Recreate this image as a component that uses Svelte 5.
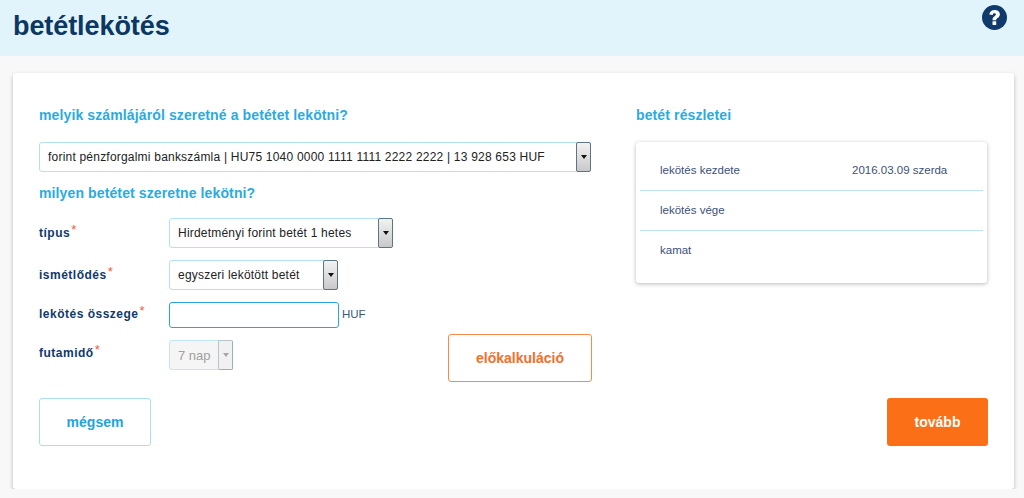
<script>
  const rows = [
    { label: 'lekötés kezdete', value: '2016.03.09 szerda' },
    { label: 'lekötés vége', value: '' },
    { label: 'kamat', value: '' }
  ];
</script>

{#snippet arrow(disabled)}
  <span class="arrow" class:off={disabled}><i></i></span>
{/snippet}

<header class="top">
  <h1>betétlekötés</h1>
  <svg class="help" viewBox="0 0 26 26" width="25" height="25" aria-label="súgó">
    <circle cx="13" cy="13" r="13" fill="#0f3a6b" />
    <path d="M7.600 10c.2-3.100 2.500-4.900 5.600-4.900 3.200 0 5.400 1.800 5.400 4.400 0 2.100-1.100 3.100-2.500 4-1 .7-1.300 1.100-1.300 2.300h-3.900c0-2.200.7-3.200 2.100-4.200.9-.6 1.400-1 1.400-1.700 0-.8-.6-1.200-1.500-1.200-1 0-1.500.5-1.600 1.600z" fill="#fff" />
    <rect x="10.900" y="17" width="3.900" height="3.700" rx=".5" fill="#fff" />
  </svg>
</header>

<main class="card">
  <div class="cols">
    <section class="left">
      <h2>melyik számlájáról szeretné a betétet lekötni?</h2>
      <div class="select wide">
        <span class="val">forint pénzforgalmi bankszámla | HU75 1040 0000 1111 1111 2222 2222 | 13 928 653 HUF</span>
        {@render arrow(false)}
      </div>
      <h2 class="second">milyen betétet szeretne lekötni?</h2>

      <div class="row r1">
        <span class="lbl">típus<em>*</em></span>
        <div class="select s-type">
          <span class="val">Hirdetményi forint betét 1 hetes</span>
          {@render arrow(false)}
        </div>
      </div>
      <div class="row r2">
        <span class="lbl">ismétlődés<em>*</em></span>
        <div class="select s-rep">
          <span class="val">egyszeri lekötött betét</span>
          {@render arrow(false)}
        </div>
      </div>
      <div class="row r3">
        <span class="lbl">lekötés összege<em>*</em></span>
        <input class="amount" type="text" />
        <span class="unit">HUF</span>
      </div>
      <div class="last">
        <div class="row r4">
          <span class="lbl">futamidő<em>*</em></span>
          <div class="select s-term disabled">
            <span class="val">7 nap</span>
            {@render arrow(true)}
          </div>
        </div>
        <button class="btn calc">előkalkuláció</button>
      </div>
    </section>

    <aside class="right">
      <h2>betét részletei</h2>
      <div class="details">
        {#each rows as r}
          <div class="d-row">
            <span class="d-l">{r.label}</span>
            <span class="d-v">{r.value}</span>
          </div>
        {/each}
      </div>
    </aside>
  </div>

  <div class="actions">
    <button class="btn cancel">mégsem</button>
    <button class="btn next">tovább</button>
  </div>
</main>

<style>
  :global(body) {
    margin: 0;
    background: #f8f8f8;
    font-family: "Liberation Sans", Arial, sans-serif;
  }
  .top {
    height: 56px;
    background: #e1f4fc;
    display: flex;
    justify-content: space-between;
    align-items: flex-start;
    padding: 0 17px 0 13px;
    box-sizing: border-box;
  }
  h1 {
    margin: 0;
    font-size: 27px;
    line-height: 53px;
    font-weight: 700;
    letter-spacing: -0.08px;
    color: #0c3762;
  }
  .help {
    margin-top: 5px;
  }
  .card {
    margin: 17px 10px 0 13px;
    height: 416px;
    box-sizing: border-box;
    background: #fff;
    border-radius: 3px;
    box-shadow: 0 2px 4px rgba(0, 0, 0, 0.25);
    padding: 33px 26px 0;
  }
  .cols {
    display: flex;
    gap: 45px;
  }
  .left {
    width: 552px;
    flex: none;
  }
  .right {
    flex: 1;
  }
  h2 {
    margin: 0;
    font-size: 14px;
    line-height: 18px;
    font-weight: 700;
    color: #29abe2;
    letter-spacing: 0.12px;
  }
  .second {
    margin-top: 12px;
  }
  .select {
    display: flex;
    align-items: stretch;
    box-sizing: border-box;
    border: 1px solid #b5e0f2;
    border-radius: 3px;
    background: #fff;
    font-size: 12px;
    letter-spacing: 0.21px;
    color: #222;
  }
  .val {
    flex: 1;
    padding-left: 8px;
    align-self: center;
    white-space: nowrap;
    overflow: hidden;
  }
  .wide {
    height: 30px;
    margin-top: 18px;
  }
  .arrow {
    width: 15px;
    flex: none;
    box-sizing: border-box;
    border: 1px solid #5f7482;
    border-radius: 2px;
    margin: -1px -1px -1px 0;
    background: linear-gradient(#f2f2f2, #c9c9c9);
    display: flex;
    align-items: center;
    justify-content: center;
  }
  .arrow i {
    width: 0;
    height: 0;
    border: 3.500px solid transparent;
    border-top: 4px solid #111;
    border-bottom: 0;
  }
  .arrow.off {
    background: #f1f1f1;
    border-color: #b9c4ca #8fb3c4 #8fb3c4 #b9c4ca;
  }
  .arrow.off i {
    border-top-color: #a6a6a6;
  }
  .row {
    display: flex;
    align-items: center;
  }
  .lbl {
    width: 130px;
    flex: none;
    font-size: 12px;
    font-weight: 700;
    letter-spacing: 0.5px;
    color: #0f3a6b;
    margin-top: -2px;
  }
  .r3 .lbl {
    margin-top: -3px;
  }
  .r4 .lbl {
    margin-top: -5px;
  }
  .lbl em {
    font-style: normal;
    font-weight: 400;
    color: #ec5a3c;
    font-size: 13px;
    margin-left: 1px;
    position: relative;
    top: -3px;
  }
  .r1 {
    margin-top: 16px;
  }
  .r2 {
    margin-top: 12px;
  }
  .r3 {
    margin-top: 12px;
  }
  .s-type {
    width: 224px;
    height: 30px;
  }
  .s-rep {
    width: 169px;
    height: 30px;
  }
  .amount {
    width: 170px;
    height: 26px;
    box-sizing: border-box;
    border: 1px solid #29a3d8;
    border-radius: 3px;
    padding: 0;
    outline: none;
    background: #fff;
  }
  .unit {
    margin-left: 3px;
    font-size: 11.500px;
    color: #3a5a7a;
    margin-top: -2px;
  }
  .last {
    display: flex;
    justify-content: space-between;
    align-items: flex-start;
    margin-top: 6px;
  }
  .r4 {
    margin-top: 6px;
  }
  .s-term {
    width: 64px;
    height: 30px;
  }
  .disabled {
    background: #f5f5f5;
    border-color: #c3e6f4;
    color: #a0a0a0;
    font-size: 13px;
    letter-spacing: 0;
  }
  .btn {
    font-family: inherit;
    font-size: 14px;
    font-weight: 700;
    height: 48px;
    border-radius: 3px;
    background: #fff;
    padding: 0;
    cursor: pointer;
  }
  .calc {
    width: 144px;
    margin-right: -1px;
    border: 1px solid #f58a4b;
    color: #f26f2c;
  }
  .actions {
    display: flex;
    justify-content: space-between;
    margin-top: 16px;
  }
  .cancel {
    width: 112px;
    border: 1px solid #a9def3;
    color: #1fa3e0;
  }
  .next {
    width: 101px;
    border: 0;
    background: #fb7016;
    color: #fff;
  }
  .details {
    margin-top: 18px;
    width: 351px;
    height: 141px;
    box-sizing: border-box;
    background: #fff;
    border-radius: 3px;
    box-shadow: 0 1px 4px rgba(0, 0, 0, 0.28);
    padding: 9px 4px 0;
  }
  .d-row {
    display: flex;
    height: 39px;
    align-items: center;
    border-bottom: 1px solid #bfe3f0;
    font-size: 11.500px;
    color: #3d4f77;
    padding-left: 20px;
  }
  .d-row span {
    margin-top: -2px;
  }
  .d-row:last-child {
    border-bottom: 0;
  }
  .d-l {
    width: 192px;
    flex: none;
  }
</style>
